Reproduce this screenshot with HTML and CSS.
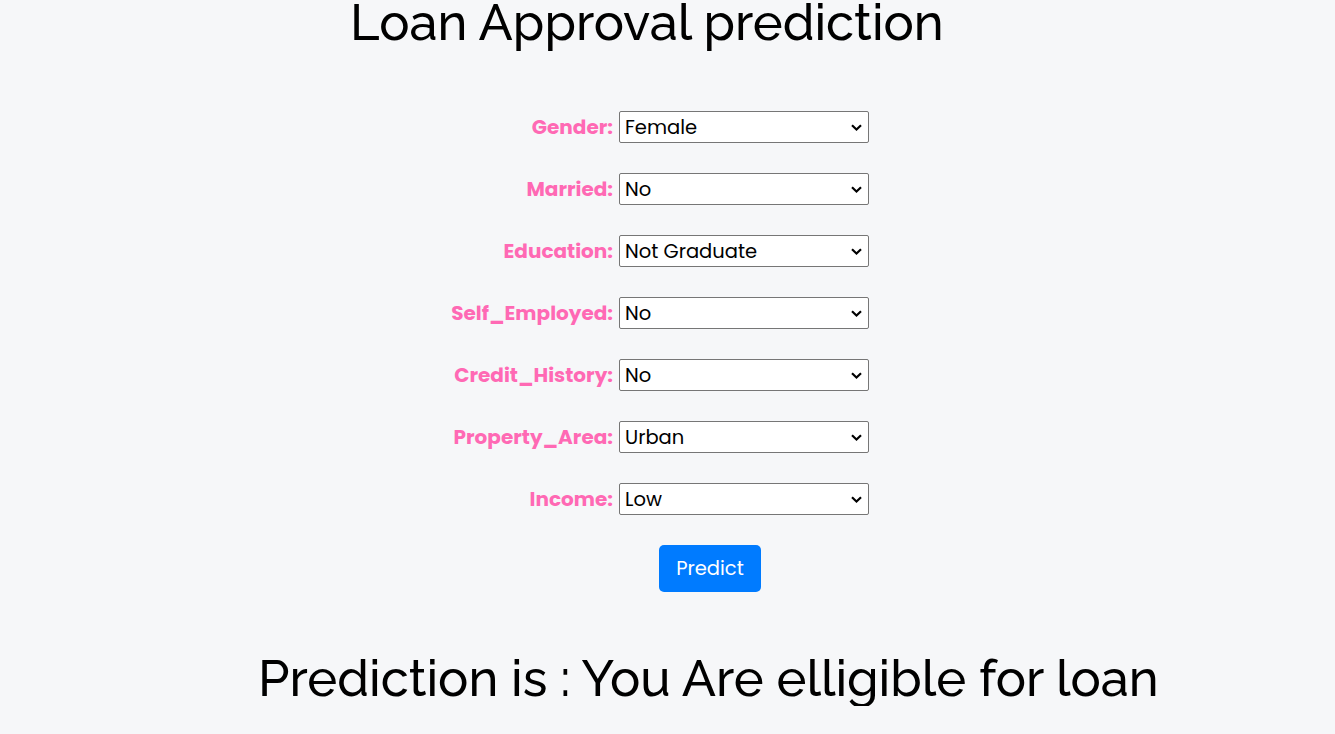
FILE: index.html
```html
<!DOCTYPE html>
<html lang="en">
<head>
<meta charset="utf-8">
<title>Loan Approval prediction</title>
<link rel="stylesheet" href="styles.css">
</head>
<body>
<h1 class="title">Loan Approval prediction</h1>
<form class="form">
  <label class="label" for="gender">Gender:</label>
  <select class="field" id="gender"><option>Female</option><option>Male</option></select>
  <label class="label" for="married">Married:</label>
  <select class="field" id="married"><option>No</option><option>Yes</option></select>
  <label class="label" for="education">Education:</label>
  <select class="field" id="education"><option>Not Graduate</option><option>Graduate</option></select>
  <label class="label" for="self">Self_Employed:</label>
  <select class="field" id="self"><option>No</option><option>Yes</option></select>
  <label class="label" for="credit">Credit_History:</label>
  <select class="field" id="credit"><option>No</option><option>Yes</option></select>
  <label class="label" for="area">Property_Area:</label>
  <select class="field" id="area"><option>Urban</option><option>Rural</option><option>Semiurban</option></select>
  <label class="label" for="income">Income:</label>
  <select class="field" id="income"><option>Low</option><option>Medium</option><option>High</option></select>
  <div class="actions"><button type="button" class="btn">Predict</button></div>
</form>
<h2 class="result">Prediction is : You Are elligible for loan</h2>
</body>
</html>
```
FILE: styles.css
```css
html, body {
  background: #f6f7f9;
}
body {
  margin: 0 8px;
  font-family: "Raleway", "Lato", sans-serif;
  color: #000;
}
.title {
  margin: 0;
  padding-left: 342px;
  font-family: "Raleway", "Lato", sans-serif;
  font-weight: 500;
  font-size: 50.6px;
  line-height: 44px;
}
.form {
  display: grid;
  grid-template-columns: 605px 250px;
  column-gap: 6px;
  row-gap: 30px;
  align-items: center;
  margin-top: 67px;
}
.label {
  justify-self: end;
  font-family: "Poppins", "Noto Sans", sans-serif;
  font-weight: 700;
  font-size: 20px;
  color: #ff69b4;
}
.field {
  -webkit-appearance: none;
  appearance: none;
  width: 250px;
  height: 32px;
  font-family: "Poppins", "Noto Sans", sans-serif;
  font-size: 19.5px;
  color: #000;
  background-color: #fff;
  background-image: url("data:image/svg+xml,%3Csvg xmlns='http://www.w3.org/2000/svg' width='11' height='7' viewBox='0 0 11 7'%3E%3Cpath d='M1 1.2 L5.5 5.5 L10 1.2' fill='none' stroke='%23000' stroke-width='2.2'/%3E%3C/svg%3E");
  background-repeat: no-repeat;
  background-position: right 6px center;
  border: 1px solid #767676;
  border-radius: 2px;
  padding: 0 24px 0 5px;
}
.actions {
  grid-column: 1 / 3;
  display: flex;
  padding-left: 651px;
}
.btn {
  width: 102px;
  height: 47px;
  background: #007bff;
  color: #fff;
  border: none;
  border-radius: 5px;
  font-family: "Poppins", "Noto Sans", sans-serif;
  font-size: 19.5px;
  cursor: pointer;
}
.result {
  margin: 58px 0 0;
  padding-left: 250px;
  font-family: "Raleway", "Lato", sans-serif;
  font-weight: 500;
  font-size: 50.6px;
  line-height: 56px;
}
```
